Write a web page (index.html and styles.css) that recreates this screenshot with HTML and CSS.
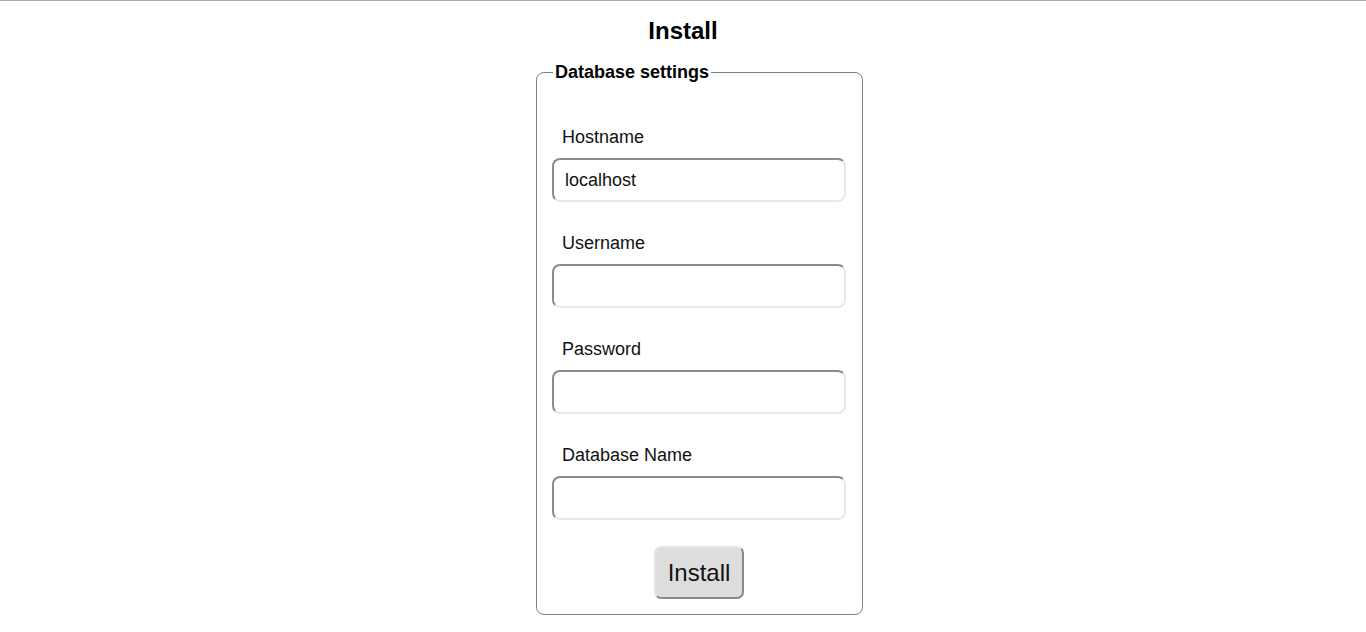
FILE: index.html
```html
<!DOCTYPE html>
<html>
<head>
<meta charset="utf-8">
<link rel="stylesheet" href="styles.css">
</head>
<body>
<h1 class="title">Install</h1>
<div class="wrap">
  <form class="form">
    <fieldset class="box">
      <legend class="legend">Database settings</legend>
      <div class="field">
        <label class="label">Hostname</label>
        <input class="input" type="text" value="localhost">
      </div>
      <div class="field">
        <label class="label">Username</label>
        <input class="input" type="text">
      </div>
      <div class="field">
        <label class="label">Password</label>
        <input class="input" type="password">
      </div>
      <div class="field">
        <label class="label">Database Name</label>
        <input class="input" type="text">
      </div>
      <div class="actions">
        <button class="btn" type="button">Install</button>
      </div>
    </fieldset>
  </form>
</div>
</body>
</html>
```
FILE: styles.css
```css
html, body {
  margin: 0;
  padding: 0;
  background: #fff;
}
body {
  border-top: 1px solid #aaaaaa;
  font-family: "Liberation Sans", Arial, sans-serif;
  color: #111;
}
.title {
  margin: 16px 0 0;
  font-size: 24px;
  line-height: 28px;
  text-align: center;
  font-weight: bold;
  color: #000;
}
.wrap {
  width: 358px;
  margin: 0 auto;
  padding-left: 32px;
  box-sizing: border-box;
}
.form {
  margin: 17px 0 0;
}
.box {
  margin: 0;
  width: 327px;
  box-sizing: border-box;
  border: 1px solid #808080;
  border-radius: 8px;
  padding: 44px 16px 15px 15px;
}
.legend {
  font-weight: bold;
  font-size: 18px;
  line-height: 20px;
  padding: 0 2px;
  margin-left: 1px;
  color: #000;
}
.field {
  display: flex;
  flex-direction: column;
  margin-bottom: 30px;
}
.label {
  font-size: 18px;
  line-height: 22px;
  padding-left: 10px;
  margin-bottom: 10px;
}
.input {
  height: 44px;
  box-sizing: border-box;
  width: 100%;
  border: 2px solid #e8e8e8;
  border-top-color: #8c8c8c;
  border-left-color: #8c8c8c;
  border-radius: 8px;
  padding: 0 11px;
  font-family: "Liberation Sans", Arial, sans-serif;
  font-size: 18px;
  color: #111;
  outline: none;
}
.actions {
  display: flex;
  justify-content: center;
  margin-top: -4px;
}
.btn {
  width: 90px;
  height: 53px;
  box-sizing: border-box;
  background: #dddddd;
  border: 2px solid #e4e4e4;
  border-right-color: #8a8a8a;
  border-bottom-color: #8a8a8a;
  border-radius: 7px;
  font-family: "Liberation Sans", Arial, sans-serif;
  font-size: 24px;
  color: #111;
  padding: 0;
}
```
